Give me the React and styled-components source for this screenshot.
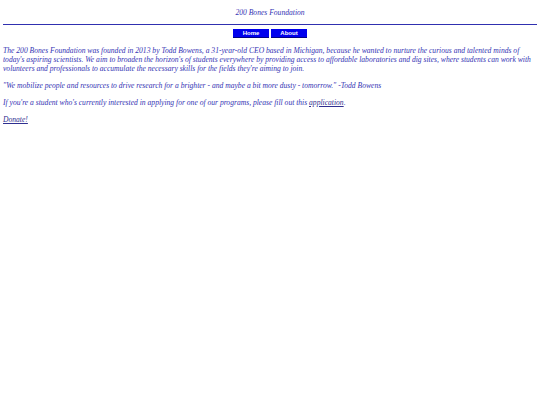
import React from 'react';
import styled, {createGlobalStyle} from 'styled-components';

const GlobalStyle = createGlobalStyle`
  html, body {
    margin: 0;
    padding: 0;
    background: #ffffff;
  }
  body {
    font-family: "Liberation Serif", "Times New Roman", serif;
  }
`;

const Page = styled.div`
  padding: 0 3px;
  color: #3434b4;
  font-size: 7.6px;
  line-height: 9px;
  font-style: italic;
`;

const Title = styled.div`
  text-align: center;
  padding-top: 8px;
  height: 16px;
  border-bottom: 1px solid #3030b0;
`;

const Nav = styled.nav`
  display: flex;
  justify-content: center;
  gap: 2px;
  margin-top: 4px;
`;

const NavButton = styled.a`
  display: flex;
  align-items: center;
  justify-content: center;
  width: 36px;
  height: 9px;
  background: #0000ee;
  border-bottom: 1px solid #000088;
  box-sizing: border-box;
  color: #ffffff;
  font-family: "Liberation Sans", Arial, sans-serif;
  font-style: normal;
  font-weight: bold;
  font-size: 6px;
  text-decoration: none;
`;

const Text = styled.p`
  margin: 8px 0 0;
  &:first-of-type {
    margin-top: 8px;
  }
`;

const Link = styled.a`
  color: #2f2f90;
  text-decoration: underline;
`;

export default function App() {
  return (
    <>
      <GlobalStyle />
      <Page>
        <Title>200 Bones Foundation</Title>
        <Nav>
          <NavButton href="#">Home</NavButton>
          <NavButton href="#">About</NavButton>
        </Nav>
        <Text>
          The 200 Bones Foundation was founded in 2013 by Todd Bowens, a 31-year-old CEO based in
          Michigan, because he wanted to nurture the curious and talented minds of today's aspiring
          scientists. We aim to broaden the horizon's of students everywhere by providing access to
          affordable laboratories and dig sites, where students can work with volunteers and
          professionals to accumulate the necessary skills for the fields they're aiming to join.
        </Text>
        <Text>
          "We mobilize people and resources to drive research for a brighter - and maybe a bit more
          dusty - tomorrow." -Todd Bowens
        </Text>
        <Text>
          If you're a student who's currently interested in applying for one of our programs, please
          fill out this <Link href="#">application</Link>.
        </Text>
        <Text>
          <Link href="#">Donate!</Link>
        </Text>
      </Page>
    </>
  );
}
